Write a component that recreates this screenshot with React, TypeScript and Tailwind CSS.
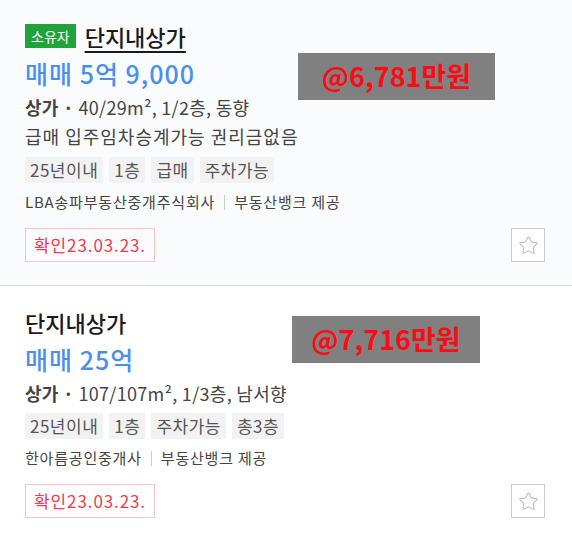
import { Star } from 'lucide-react';

interface ListingProps {
  owner?: boolean;
  title: string;
  price: string;
  spec: string;
  desc?: string;
  tags: string[];
  agent: string;
  unit: string;
  unitPos: string;
  bg: string;
}

const Listing = ({ owner, title, price, spec, desc, tags, agent, unit, unitPos, bg }: ListingProps) => {
  return (
    <div className={`relative px-[25px] pt-[24px] pb-[23px] ${bg}`}>
      <div className="flex items-center gap-[9px] h-[24px]">
        {owner && (
          <span className="bg-[#21a23b] text-white text-[14px] leading-[24px] px-[6px]">소유자</span>
        )}
        <span
          className={`text-[22px] leading-[24px] font-medium text-[#1a1a1a] ${
            owner ? 'underline underline-offset-[5px] decoration-[1.5px]' : ''
          }`}
        >
          {title}
        </span>
      </div>
      <div className="text-[25px] leading-[34px] mt-[8px] text-[#4a8ff0] font-medium tracking-[1px]">{price}</div>
      <div className="text-[18px] leading-[28px] text-[#444] mt-[3px] tracking-[0.3px]">
        <span className="font-bold">상가 · </span>
        {spec}
      </div>
      {desc && <div className="text-[18px] leading-[30px] text-[#444] tracking-[1px]">{desc}</div>}
      <div className="flex gap-[6px] mt-[6px]">
        {tags.map((t) => (
          <span key={t} className="bg-[#f2f2f2] text-[#555] text-[17px] leading-[26px] px-[5px] tracking-[0.5px]">
            {t}
          </span>
        ))}
      </div>
      <div className="flex items-center text-[15px] text-[#444] mt-[8px] leading-[22px] tracking-[0.8px]">
        <span>{agent}</span>
        <span className="w-px h-[15px] bg-[#ccc] mx-[9px]" />
        <span>부동산뱅크 제공</span>
      </div>
      <div className="flex items-center justify-between mt-[15px]">
        <div className="border border-[#f7c3cb] text-[#ee3a52] text-[17px] leading-[32px] px-[8px] tracking-[0.9px]">
          확인23.03.23.
        </div>
        <div className="w-[34px] h-[34px] border border-[#ccc] bg-white flex items-center justify-center mr-[2px]">
          <Star size={21} strokeWidth={1.2} className="text-[#b8bec8]" />
        </div>
      </div>
      <div
        className={`absolute bg-[#808080] text-[#ff0a14] font-bold text-[27px] flex items-center justify-center ${unitPos}`}
      >
        {unit}
      </div>
    </div>
  );
};

export default function App() {
  return (
    <div
      className="w-[572px] h-[533px] overflow-hidden bg-white"
      style={{ fontFamily: '"Noto Sans CJK KR", "Noto Sans", sans-serif' }}
    >
      <div className="border-b border-[#d3dbe4]">
        <Listing
          owner
          title="단지내상가"
          price="매매 5억 9,000"
          spec="40/29m², 1/2층, 동향"
          desc="급매 입주임차승계가능 권리금없음"
          tags={['25년이내', '1층', '급매', '주차가능']}
          agent="LBA송파부동산중개주식회사"
          unit="@6,781만원"
          unitPos="left-[298px] top-[53px] w-[197px] h-[47px]"
          bg="bg-[#f9fbfd]"
        />
      </div>
      <Listing
        title="단지내상가"
        price="매매 25억"
        spec="107/107m², 1/3층, 남서향"
        tags={['25년이내', '1층', '주차가능', '총3층']}
        agent="한아름공인중개사"
        unit="@7,716만원"
        unitPos="left-[292px] top-[30px] w-[188px] h-[47px]"
        bg="bg-white"
      />
    </div>
  );
}
